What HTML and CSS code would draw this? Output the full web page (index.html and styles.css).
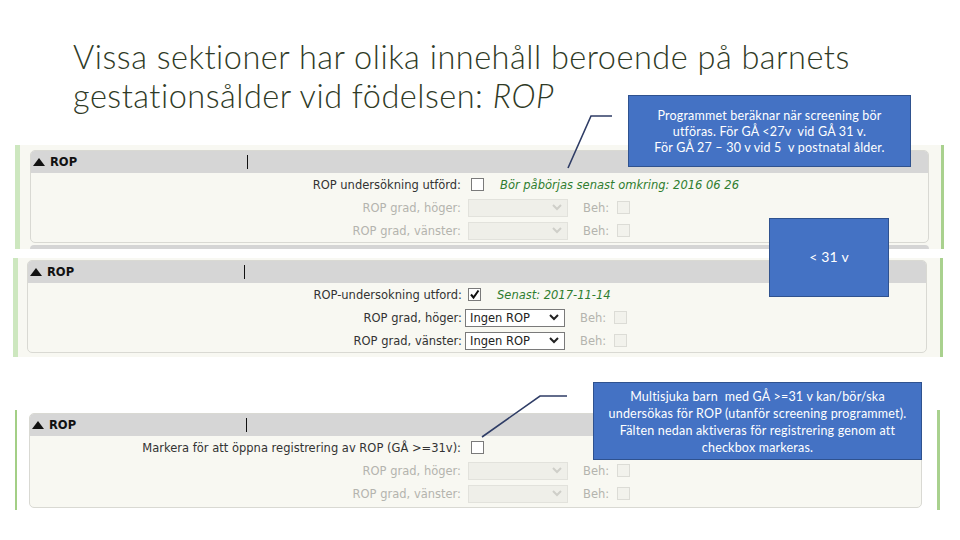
FILE: index.html
```html
<!DOCTYPE html>
<html lang="sv">
<head>
<meta charset="utf-8">
<title>ROP</title>
<link rel="stylesheet" href="styles.css">
</head>
<body>
<div class="slide">
  <h1 class="title">Vissa sektioner har olika innehåll beroende på barnets<br>gestationsålder vid födelsen: <em>ROP</em></h1>

  <div class="shot shot1">
    <div class="panel p1">
      <div class="hd"><span class="hd-title"><svg class="tri" width="12" height="8" viewBox="0 0 12 8"><polygon points="6,0 12,8 0,8" fill="#111"/></svg>ROP</span><span class="caret"></span></div>
      <div class="bd">
        <div class="row"><span class="lbl">ROP undersökning utförd:</span><span class="cb"></span><span class="note">Bör påbörjas senast omkring: 2016 06 26</span></div>
        <div class="row off"><span class="lbl">ROP grad, höger:</span><span class="sel"><span class="sel-t"></span><svg class="chev" width="10" height="7" viewBox="0 0 10 7"><polyline points="1,1 5,5 9,1" fill="none" stroke="currentColor" stroke-width="2"/></svg></span><span class="beh">Beh:</span><span class="cb"></span></div>
        <div class="row off"><span class="lbl">ROP grad, vänster:</span><span class="sel"><span class="sel-t"></span><svg class="chev" width="10" height="7" viewBox="0 0 10 7"><polyline points="1,1 5,5 9,1" fill="none" stroke="currentColor" stroke-width="2"/></svg></span><span class="beh">Beh:</span><span class="cb"></span></div>
      </div>
    </div>
    <div class="next-strip"></div>
  </div>

  <div class="shot shot2">
    <div class="panel p2">
      <div class="hd"><span class="hd-title"><svg class="tri" width="12" height="8" viewBox="0 0 12 8"><polygon points="6,0 12,8 0,8" fill="#111"/></svg>ROP</span><span class="caret"></span></div>
      <div class="bd">
        <div class="row"><span class="lbl">ROP-undersokning utford:</span><span class="cb on"><svg width="11" height="11" viewBox="0 0 11 11"><polyline points="2,5.5 4.5,8.5 9.5,1.5" fill="none" stroke="#111" stroke-width="2"/></svg></span><span class="note">Senast: 2017-11-14</span></div>
        <div class="row"><span class="lbl">ROP grad, höger:</span><span class="sel en"><span class="sel-t">Ingen ROP</span><svg class="chev" width="10" height="7" viewBox="0 0 10 7"><polyline points="1,1 5,5 9,1" fill="none" stroke="currentColor" stroke-width="2"/></svg></span><span class="beh">Beh:</span><span class="cb dis"></span></div>
        <div class="row"><span class="lbl">ROP grad, vänster:</span><span class="sel en"><span class="sel-t">Ingen ROP</span><svg class="chev" width="10" height="7" viewBox="0 0 10 7"><polyline points="1,1 5,5 9,1" fill="none" stroke="currentColor" stroke-width="2"/></svg></span><span class="beh">Beh:</span><span class="cb dis"></span></div>
      </div>
    </div>
  </div>

  <div class="shot shot3">
    <div class="panel p3">
      <div class="hd"><span class="hd-title"><svg class="tri" width="12" height="8" viewBox="0 0 12 8"><polygon points="6,0 12,8 0,8" fill="#111"/></svg>ROP</span><span class="caret"></span></div>
      <div class="bd">
        <div class="row"><span class="lbl">Markera för att öppna registrering av ROP (GÅ &gt;=31v):</span><span class="cb"></span></div>
        <div class="row off"><span class="lbl">ROP grad, höger:</span><span class="sel"><span class="sel-t"></span><svg class="chev" width="10" height="7" viewBox="0 0 10 7"><polyline points="1,1 5,5 9,1" fill="none" stroke="currentColor" stroke-width="2"/></svg></span><span class="beh">Beh:</span><span class="cb"></span></div>
        <div class="row off"><span class="lbl">ROP grad, vänster:</span><span class="sel"><span class="sel-t"></span><svg class="chev" width="10" height="7" viewBox="0 0 10 7"><polyline points="1,1 5,5 9,1" fill="none" stroke="currentColor" stroke-width="2"/></svg></span><span class="beh">Beh:</span><span class="cb"></span></div>
      </div>
    </div>
  </div>

  <svg class="connectors" width="960" height="540" viewBox="0 0 960 540">
    <polyline points="612,116 591,116 568,168" fill="none" stroke="#2f3d66" stroke-width="1.6"/>
    <polyline points="567,396 540,396 482,437" fill="none" stroke="#2f3d66" stroke-width="1.6"/>
  </svg>

  <div class="callout c1">Programmet beräknar när screening bör<br>utföras. För GÅ &lt;27v&nbsp; vid GÅ 31 v.<br>För GÅ 27 – 30 v vid 5&nbsp; v postnatal ålder.</div>
  <div class="callout c2">&lt; 31 v</div>
  <div class="callout c3">Multisjuka barn&nbsp; med GÅ &gt;=31 v kan/bör/ska<br>undersökas för ROP (utanför screening programmet).<br>Fälten nedan aktiveras för registrering genom att<br>checkbox markeras.</div>
</div>
</body>
</html>
```

FILE: styles.css
```css
* { box-sizing: border-box; }
html, body { margin: 0; padding: 0; background: #fff; }
.slide {
  position: relative;
  width: 960px;
  height: 540px;
  overflow: hidden;
  background: #fff;
}
.title {
  margin: 0;
  padding: 37px 0 0 73px;
  height: 114px;
  font-family: "Lato", "Open Sans", sans-serif;
  font-weight: 300;
  font-size: 32.5px;
  line-height: 39px;
  letter-spacing: 0.5px;
  color: #2f3a26;
}
.title em { font-style: italic; }

.shot {
  font-family: "DejaVu Sans", Verdana, sans-serif;
  font-size: 11.5px;
}
.shot1 {
  margin: 31px 0 0 15px;
  width: 929px;
  height: 104px;
  padding: 5px 0 0 10px;
  background: #f8f8f2;
  border-left: 5px solid #cde7bf;
  border-right: 3px solid #a9d18e;
}
.shot2 {
  margin: 9px 0 0 13px;
  width: 930px;
  height: 99px;
  padding: 2px 0 0 9px;
  background: #f8f8f2;
  border-left: 5px solid #cde7bf;
  border-right: 3px solid #a9d18e;
}
.shot3 {
  margin: 53px 0 0 15px;
  width: 925px;
  height: 100px;
  padding: 3px 0 0 12px;
  background: #fff;
  border-left: 2px solid #a3cf86;
  border-right: 3px solid #a9d18e;
}
.panel {
  border: 1px solid #d9d9d3;
  border-radius: 5px;
  overflow: hidden;
  background: #f8f8f2;
}
.p1 { width: 899px; height: 93px; --lw: 430px; }
.p2 { width: 900px; height: 93px; --lw: 434px; }
.p3 { width: 893px; height: 95px; --lw: 431px; }

.next-strip {
  margin-top: 2px;
  width: 899px;
  height: 4px;
  background: #d5d5d5;
  border-radius: 5px 5px 0 0;
}
.hd {
  height: 22px;
  background: #d6d6d6;
  display: flex;
  align-items: center;
  font-weight: bold;
  font-size: 11.5px;
  color: #111;
}
.hd-title {
  display: flex;
  align-items: center;
  width: 216px;
  padding-left: 2px;
}
.tri { margin-right: 5px; margin-top: -1px; }
.caret {
  width: 1px;
  height: 14px;
  background: #111;
}
.bd { padding-top: 0; }
.row {
  height: 23px;
  display: flex;
  align-items: center;
  color: #333;
}
.lbl {
  width: var(--lw);
  text-align: right;
  white-space: nowrap;
}
.row.off .lbl, .row.off .beh { color: #b4b4ae; }
.cb {
  width: 13px;
  height: 13px;
  margin-left: 10px;
  border: 1px solid #7a7a7a;
  background: #fff;
  display: flex;
  align-items: center;
  justify-content: center;
  flex: none;
}
.cb.on { margin-left: 6px; }
.row.off .cb, .cb.dis {
  border-color: #dcdcd6;
  background: #f2f2ec;
}
.note {
  margin-left: 16px;
  font-style: italic;
  color: #2f7d2f;
  white-space: nowrap;
}
.sel {
  width: 100px;
  height: 18px;
  margin-left: 7px;
  border: 1px solid #e2e2dc;
  background: #efefe9;
  display: flex;
  align-items: center;
  justify-content: space-between;
  padding: 0 5px 0 4px;
  color: #cfcfc9;
  flex: none;
}
.sel.en {
  border-color: #7a7a7a;
  background: #fff;
  color: #222;
  margin-left: 3px;
}
.sel-t { font-size: 11.5px; }
.beh {
  margin-left: 15px;
  color: #b4b4ae;
}
.beh + .cb { margin-left: 8px; }

.connectors {
  position: absolute;
  left: 0;
  top: 0;
  pointer-events: none;
}
.callout {
  position: absolute;
  background: #4472c4;
  border: 1.5px solid #2f528f;
  color: #fff;
  font-family: "Lato", "Open Sans", sans-serif;
  font-size: 12.5px;
  text-align: center;
  letter-spacing: 0.2px;
}
.c1 {
  left: 628px;
  top: 95px;
  width: 283px;
  height: 72px;
  padding-top: 12px;
  line-height: 16px;
}
.c2 {
  left: 769px;
  top: 218px;
  width: 120px;
  height: 79px;
  font-size: 14px;
  padding: 0;
  line-height: 76px;
}
.c3 {
  left: 593px;
  top: 382px;
  width: 329px;
  height: 78px;
  padding-top: 5px;
  line-height: 17px;
}
```
